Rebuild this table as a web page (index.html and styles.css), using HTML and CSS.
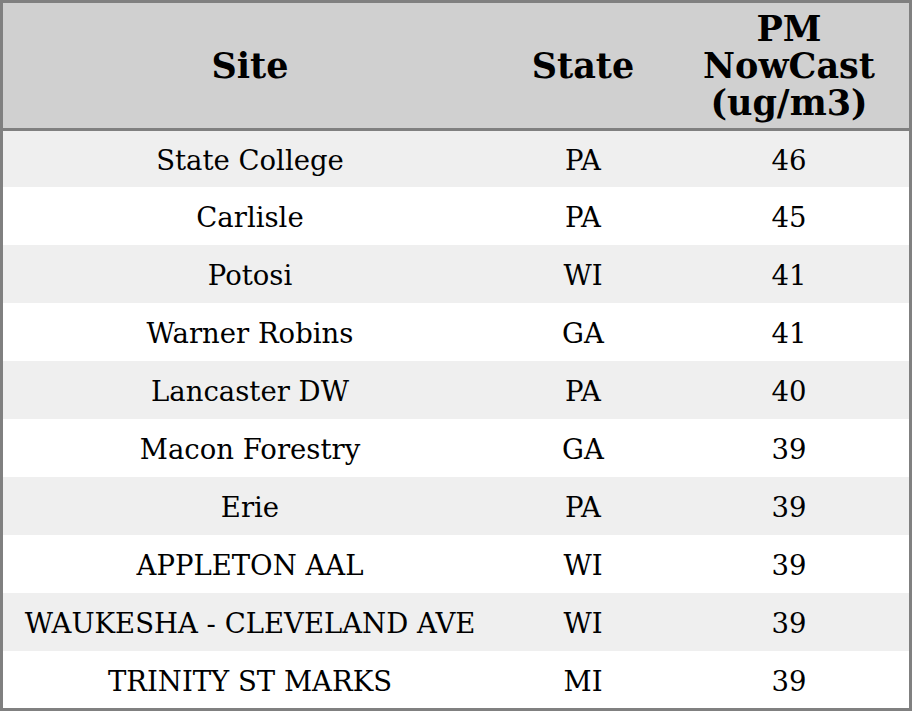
FILE: index.html
```html
<!DOCTYPE html>
<html>
<head>
<meta charset="utf-8">
<link rel="stylesheet" href="styles.css">
</head>
<body>
<table class="aq">
  <colgroup>
    <col class="c-site">
    <col class="c-state">
    <col class="c-pm">
  </colgroup>
  <thead>
    <tr><th>Site</th><th>State</th><th>PM<br>NowCast<br>(ug/m3)</th></tr>
  </thead>
  <tbody>
    <tr><td>State College</td><td>PA</td><td>46</td></tr>
    <tr><td>Carlisle</td><td>PA</td><td>45</td></tr>
    <tr><td>Potosi</td><td>WI</td><td>41</td></tr>
    <tr><td>Warner Robins</td><td>GA</td><td>41</td></tr>
    <tr><td>Lancaster DW</td><td>PA</td><td>40</td></tr>
    <tr><td>Macon Forestry</td><td>GA</td><td>39</td></tr>
    <tr><td>Erie</td><td>PA</td><td>39</td></tr>
    <tr><td>APPLETON AAL</td><td>WI</td><td>39</td></tr>
    <tr><td>WAUKESHA - CLEVELAND AVE</td><td>WI</td><td>39</td></tr>
    <tr><td>TRINITY ST MARKS</td><td>MI</td><td>39</td></tr>
  </tbody>
</table>
</body>
</html>
```
FILE: styles.css
```css
html, body {
  margin: 0;
  padding: 0;
  background: #ffffff;
}
.aq {
  width: 912px;
  border-collapse: separate;
  border-spacing: 0;
  border: 3px solid #808080;
  box-sizing: border-box;
  table-layout: fixed;
  font-family: "DejaVu Serif", serif;
  color: #000;
}
.c-site { width: 494px; }
.c-state { width: 172px; }
.c-pm { width: 240px; }
.aq th {
  background: #d0d0d0;
  font-weight: bold;
  font-size: 35px;
  line-height: 37px;
  height: 125px;
  padding: 0;
  border-bottom: 3px solid #808080;
  text-align: center;
  vertical-align: middle;
}
.aq td {
  font-size: 27.5px;
  line-height: 32px;
  padding: 2px 0 0 0;
  height: 56px;
  text-align: center;
  vertical-align: middle;
}
.aq tbody tr:first-child td {
  height: 54px;
}
.aq tbody tr:last-child td {
  height: 55px;
}
.aq tbody tr:nth-child(odd) td {
  background: #efefef;
}
```
